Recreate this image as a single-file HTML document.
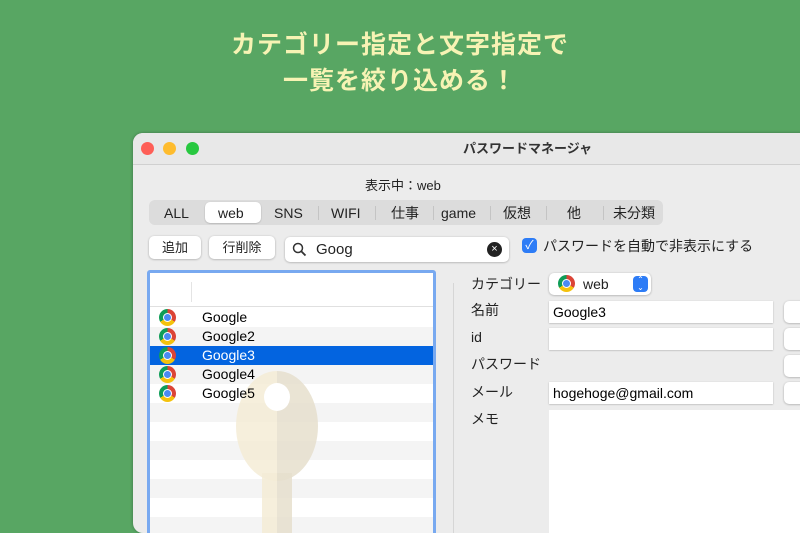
<!DOCTYPE html>
<html><head><meta charset="utf-8"><style>
*{margin:0;padding:0;box-sizing:border-box}
body{width:800px;height:500px;overflow:hidden;background:#58a663;font-family:"Liberation Sans","Noto Sans CJK JP",sans-serif;position:relative}
.h{position:absolute;left:0;width:800px;text-align:center;color:#f7f3b4;font-size:25px;line-height:34px;font-weight:bold;font-family:"Noto Sans CJK JP",sans-serif;letter-spacing:1px}
.win{position:absolute;left:133px;top:133px;width:700px;height:400px;background:#ececec;border-radius:10px;overflow:hidden;box-shadow:0 0 3px rgba(0,0,0,.3)}
.tb{height:32px;background:#e8e8e8;border-bottom:1px solid #d0d0d0;position:relative}
.dot{position:absolute;top:9px;width:13px;height:13px;border-radius:50%}
.a{position:absolute;font-size:14px;line-height:18px;color:#222;white-space:nowrap}
.btn{position:absolute;background:#fff;border-radius:5px;box-shadow:0 0.5px 2px rgba(0,0,0,.3);font-size:13px;text-align:center;color:#222}
.row{position:absolute;left:3px;width:283px;height:19px;font-size:14px;line-height:19px}
.chrome{position:absolute;left:9px;top:1px;width:17px;height:17px;border-radius:50%;background:conic-gradient(#db4437 0 120deg,#f4c20d 120deg 240deg,#0f9d58 240deg 360deg)}
.chrome:after{content:"";position:absolute;left:4px;top:4px;width:9px;height:9px;border-radius:50%;background:#4a8af4;border:1.5px solid #fff;box-sizing:border-box}
.f{position:absolute;background:#fff;height:22px;font-size:14px;line-height:22px;padding-left:4px;box-shadow:0 0.5px 1.5px rgba(0,0,0,.25)}
</style></head><body>
<div class="h" style="top:26px">カテゴリー指定と文字指定で</div>
<div class="h" style="top:62px">一覧を絞り込める！</div>
<div class="win">
<div class="tb">
<div class="dot" style="left:8px;background:#fe5f57"></div>
<div class="dot" style="left:30px;background:#febc2e"></div>
<div class="dot" style="left:53px;background:#28c840"></div>
<div class="a" style="left:330px;top:7px;font-size:13px;font-weight:bold;color:#333">パスワードマネージャ</div>
</div>
<div class="a" style="left:232px;top:44px;font-size:13px">表示中：web</div>
<div style="position:absolute;left:16px;top:67px;width:514px;height:25px;background:#dcdcdc;border-radius:6px"></div>
<div style="position:absolute;left:72px;top:69px;width:56px;height:21px;background:#fff;border-radius:5px;box-shadow:0 0.5px 1.5px rgba(0,0,0,.25)"></div>
<div class="a" style="left:31px;top:71px">ALL</div>
<div class="a" style="left:85px;top:71px">web</div>
<div class="a" style="left:141px;top:71px">SNS</div>
<div class="a" style="left:198px;top:71px">WIFI</div>
<div class="a" style="left:258px;top:71px">仕事</div>
<div class="a" style="left:308px;top:71px">game</div>
<div class="a" style="left:370px;top:71px">仮想</div>
<div class="a" style="left:434px;top:71px">他</div>
<div class="a" style="left:480px;top:71px">未分類</div>
<div style="position:absolute;left:185px;top:73px;width:1px;height:14px;background:#c4c4c4"></div>
<div style="position:absolute;left:242px;top:73px;width:1px;height:14px;background:#c4c4c4"></div>
<div style="position:absolute;left:300px;top:73px;width:1px;height:14px;background:#c4c4c4"></div>
<div style="position:absolute;left:357px;top:73px;width:1px;height:14px;background:#c4c4c4"></div>
<div style="position:absolute;left:413px;top:73px;width:1px;height:14px;background:#c4c4c4"></div>
<div style="position:absolute;left:470px;top:73px;width:1px;height:14px;background:#c4c4c4"></div>
<div class="btn" style="left:16px;top:103px;width:52px;height:23px;line-height:23px">追加</div>
<div class="btn" style="left:76px;top:103px;width:66px;height:23px;line-height:23px">行削除</div>
<div class="btn" style="left:152px;top:104px;width:224px;height:25px;text-align:left"><svg style="position:absolute;left:7px;top:5px" width="15" height="15" viewBox="0 0 15 15"><circle cx="6" cy="6" r="4.5" fill="none" stroke="#333" stroke-width="1.5"/><path d="M9.5 9.5L13.5 13.5" stroke="#333" stroke-width="1.8"/></svg><span style="position:absolute;left:31px;top:4px;font-size:15px;line-height:18px">Goog</span><span style="position:absolute;left:202px;top:5px;width:15px;height:15px;border-radius:50%;background:#222;color:#fff;font-size:11px;line-height:15px;text-align:center">×</span></div>
<div style="position:absolute;left:389px;top:105px;width:15px;height:15px;border-radius:4px;background:#2d7cf6;color:#fff;font-size:12px;line-height:15px;text-align:center">✓</div>
<div class="a" style="left:410px;top:104px">パスワードを自動で非表示にする</div>
<div style="position:absolute;left:14px;top:137px;width:289px;height:280px;border:3px solid #78a9f0;border-radius:3px;background:#fff;overflow:hidden">
<div style="position:absolute;left:0;top:33px;width:290px;height:1px;background:#e0e0e0"></div>
<div style="position:absolute;left:41px;top:9px;width:1px;height:20px;background:#e4e4e4"></div>
<div class="row" style="top:130px;left:0;background:#f4f4f4"></div>
<div class="row" style="top:168px;left:0;background:#f4f4f4"></div>
<div class="row" style="top:206px;left:0;background:#f4f4f4"></div>
<div class="row" style="top:244px;left:0;background:#f4f4f4"></div>
<div class="row" style="top:54px;left:0;background:#f4f4f4"></div>
<div class="row" style="top:92px;left:0;background:#f4f4f4"></div>
<div style="position:absolute;left:86px;top:98px;width:82px;height:110px;border-radius:50%;background:linear-gradient(90deg,#f4ecd6 50%,#e6dfcd 50%);opacity:.85"></div>
<div style="position:absolute;left:112px;top:200px;width:30px;height:80px;background:linear-gradient(90deg,#f4ecd6 50%,#e6dfcd 50%);opacity:.85"></div>
<div style="position:absolute;left:114px;top:110px;width:26px;height:28px;border-radius:50%;background:#fff"></div>
<div class="row" style="top:35px;left:0"><span class="chrome"></span><span style="position:absolute;left:52px">Google</span></div>
<div class="row" style="top:54px;left:0"><span class="chrome"></span><span style="position:absolute;left:52px">Google2</span></div>
<div class="row" style="top:73px;left:0;background:#0364e0;color:#fff"><span class="chrome"></span><span style="position:absolute;left:52px">Google3</span></div>
<div class="row" style="top:92px;left:0"><span class="chrome"></span><span style="position:absolute;left:52px">Google4</span></div>
<div class="row" style="top:111px;left:0"><span class="chrome"></span><span style="position:absolute;left:52px">Google5</span></div>
</div>
<div style="position:absolute;left:320px;top:150px;width:1px;height:260px;background:#d6d6d6"></div>
<div class="a" style="left:338px;top:142px">カテゴリー</div>
<div class="btn" style="left:416px;top:140px;width:102px;height:22px;text-align:left"><span class="chrome" style="left:9px;top:2px"></span><span style="position:absolute;left:34px;top:2px;font-size:14px;line-height:18px">web</span><span style="position:absolute;right:3px;top:3px;width:15px;height:16px;border-radius:4px;background:#2d7cf6;color:#fff;font-size:8px;line-height:8px;text-align:center">⌃<br>⌄</span></div>
<div class="a" style="left:338px;top:168px">名前</div>
<div class="f" style="left:416px;top:168px;width:224px">Google3</div>
<div class="a" style="left:338px;top:195px">id</div>
<div class="f" style="left:416px;top:195px;width:224px"></div>
<div class="a" style="left:338px;top:222px">パスワード</div>
<div class="a" style="left:338px;top:250px">メール</div>
<div class="f" style="left:416px;top:249px;width:224px">hogehoge@gmail.com</div>
<div class="a" style="left:338px;top:277px">メモ</div>
<div style="position:absolute;left:416px;top:277px;width:300px;height:140px;background:#fff"></div>
<div class="btn" style="left:651px;top:168px;width:40px;height:22px"></div>
<div class="btn" style="left:651px;top:195px;width:40px;height:22px"></div>
<div class="btn" style="left:651px;top:222px;width:40px;height:22px"></div>
<div class="btn" style="left:651px;top:249px;width:40px;height:22px"></div>
</div>
</body></html>
